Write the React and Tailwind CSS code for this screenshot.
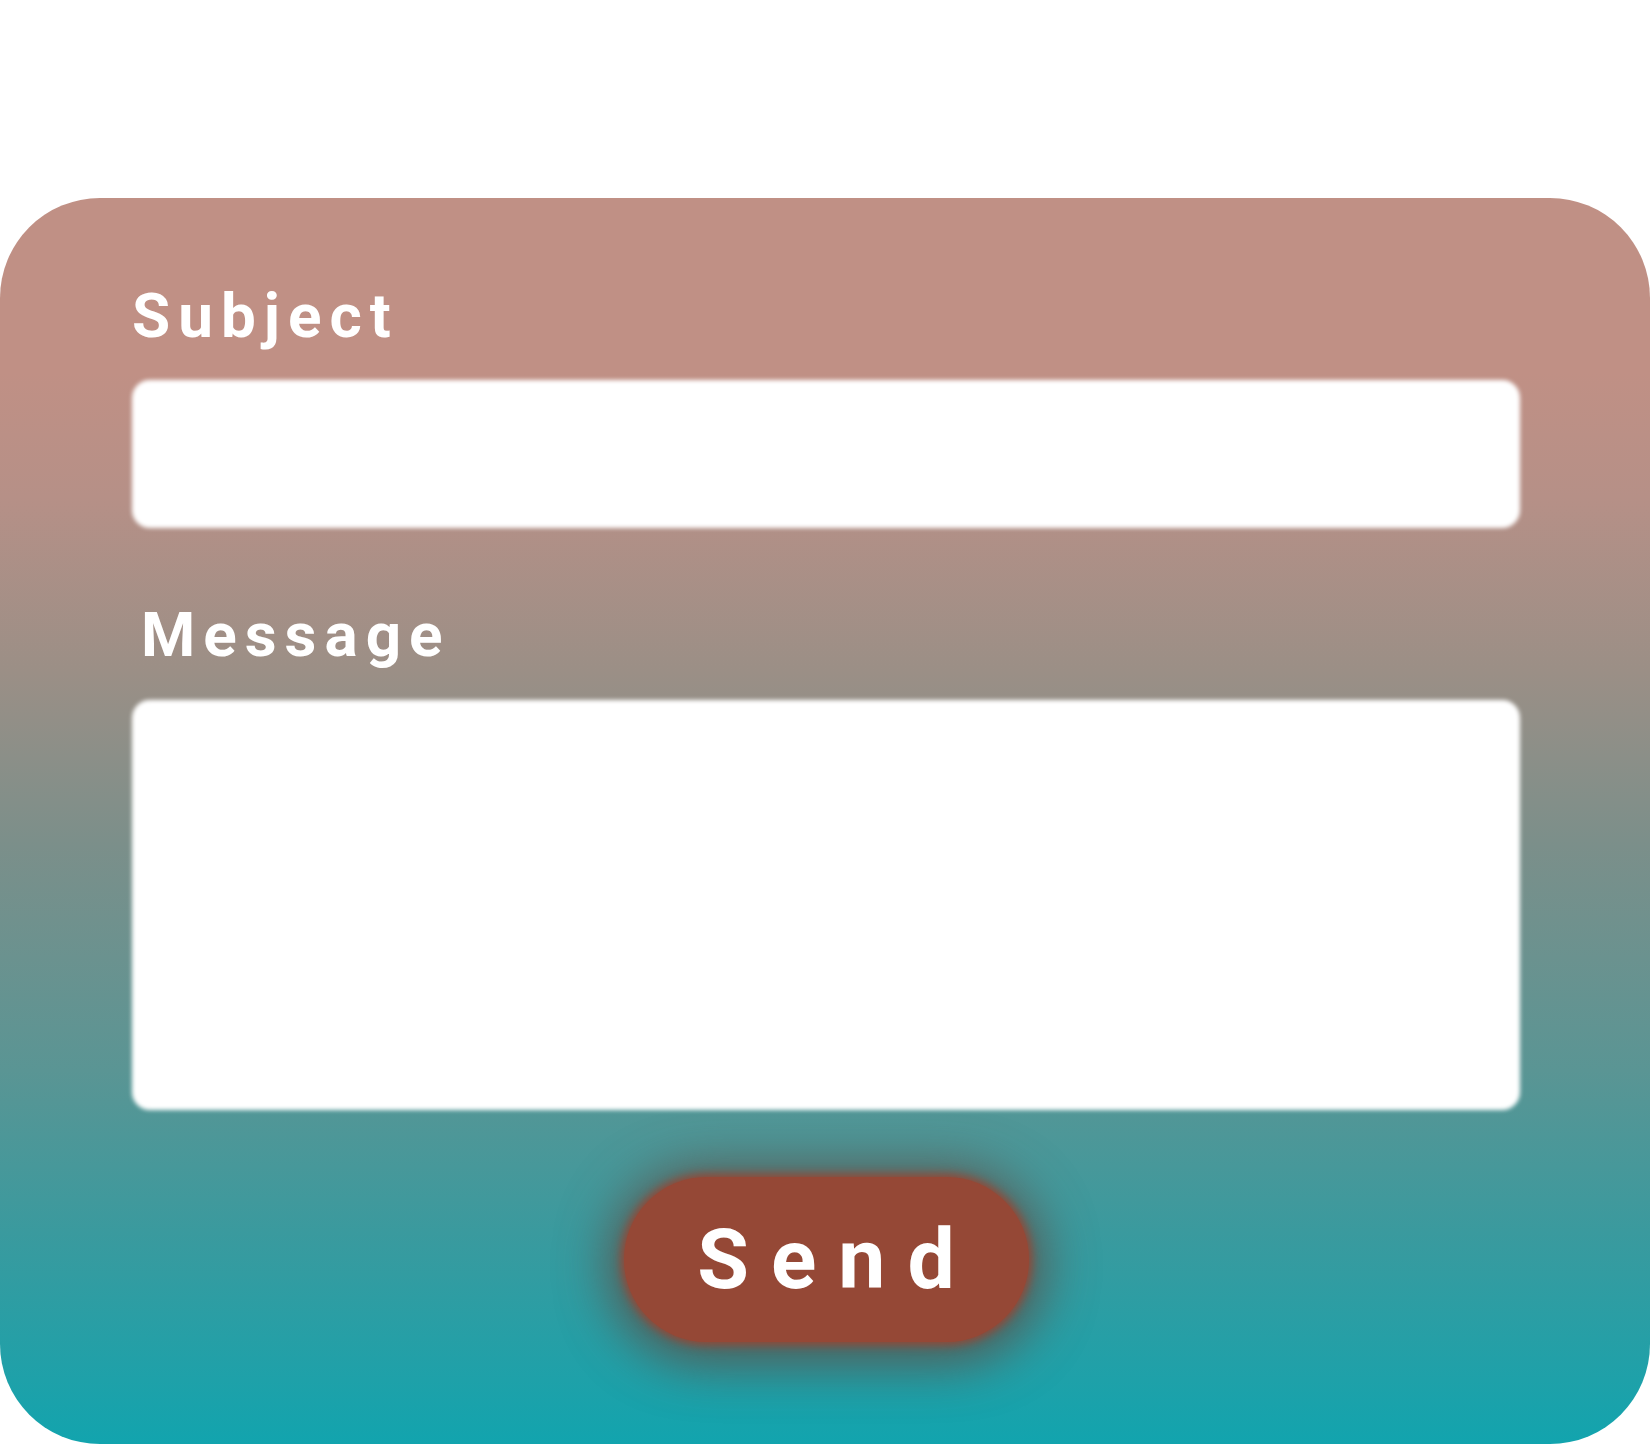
export default function App() {
  return (
    <div className="min-h-[1444px] w-full bg-white pt-[198px]" style={{ fontFamily: "Roboto, 'Liberation Sans', sans-serif" }}>
      <form
        className="flex h-[1246px] w-full flex-col rounded-[100px] bg-[linear-gradient(to_bottom,#c09085_0%,#c09085_14%,#b69087_24%,#9b8f86_38%,#7b8f8a_52%,#5a9594_70%,#3a9a9e_83%,#12a4ae_100%)] pl-[132px] pr-[130px] pt-[87px]"
        onSubmit={(e) => e.preventDefault()}
      >
        <label className="block text-[62px] font-bold leading-none tracking-[8px] text-white">Subject</label>
        <input
          type="text"
          className="mt-[33px] block h-[148px] w-full rounded-[18px] bg-white outline-none blur-[2px]"
        />
        <label className="ml-[9px] mt-[76px] block text-[62px] font-bold leading-none tracking-[8px] text-white">Message</label>
        <textarea className="mt-[34px] block h-[410px] w-full resize-none rounded-[18px] bg-white outline-none blur-[2px]" />
        <div className="mt-[67px] flex justify-center">
          <button
            type="submit"
            className="flex h-[165px] w-[405px] items-center justify-center rounded-full bg-[#954836] pl-[22px] text-[84px] font-bold leading-none tracking-[22px] text-white shadow-[0_0_10px_3px_#954836,0_6px_50px_16px_rgba(105,62,52,0.7)]"
          >
            Send
          </button>
        </div>
      </form>
    </div>
  );
}
